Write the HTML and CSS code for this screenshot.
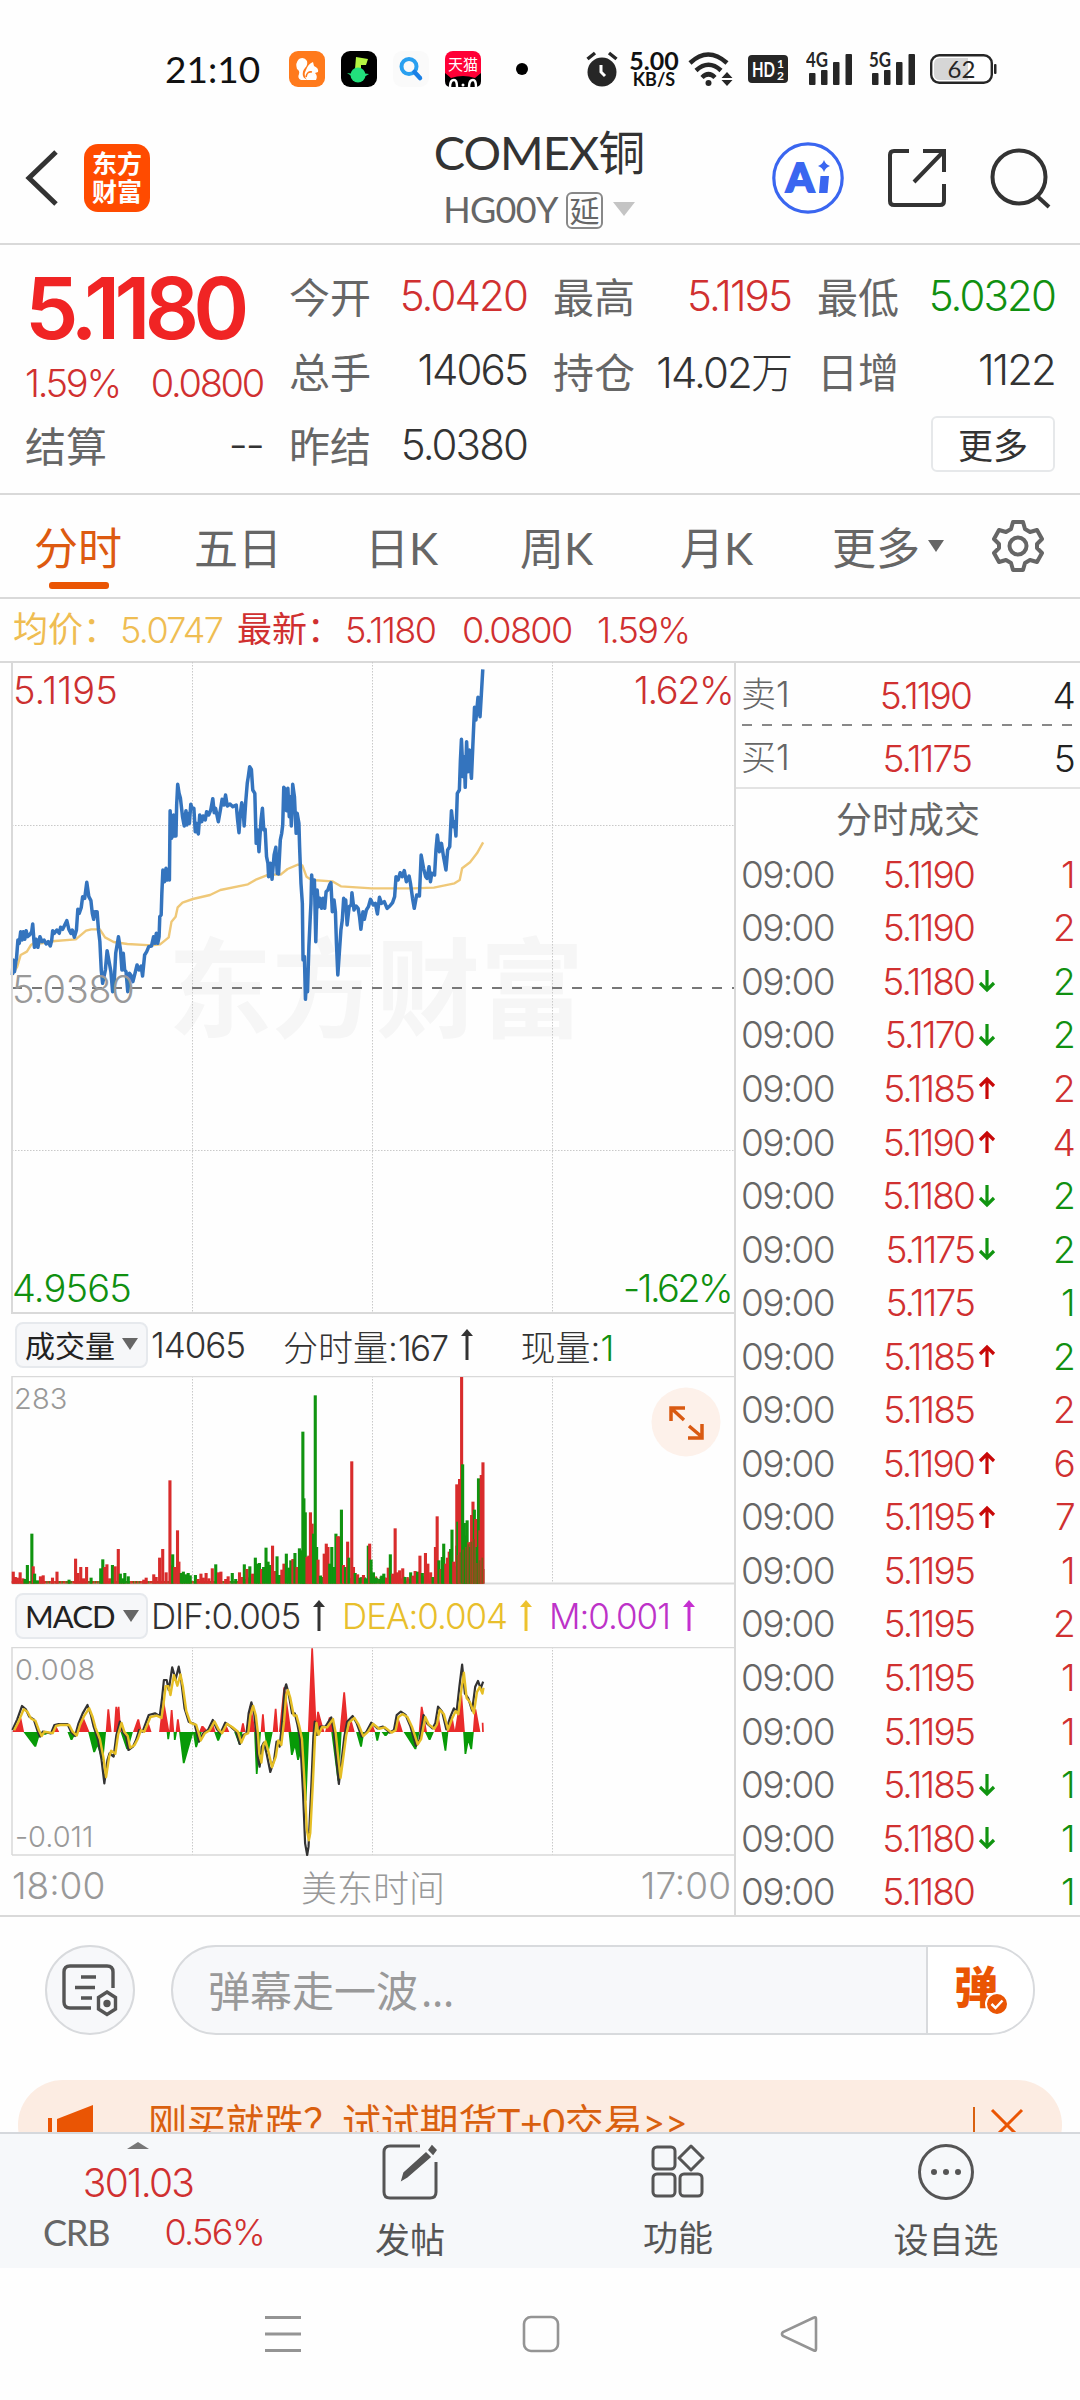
FILE: index.html
```html
<!DOCTYPE html>
<html lang="zh-CN">
<head>
  <meta charset="UTF-8" />
  <title>COMEX铜</title>
  <link rel="stylesheet" href="styles.css">
</head>
<body>
  <div class="status">
    <span class="clock">21:10</span>
    <div class="notify">
      <svg width="36" height="36" viewBox="0 0 36 36">
        <rect width="36" height="36" rx="9" fill="#ff7a1c"/>
        <path d="M8 18 Q6 12 10 8 Q15 5 18 10 Q19 14 16 17 Q13 20 14 25 Q15 28 20 29 H12 Q8 27 10 23 Q11 20 8 18Z" fill="#fff"/>
        <path d="M17 19 Q19 13 24 11 L25 15 Q30 17 29 21 L26 22 Q29 25 27 29 H18 Q14 24 17 19Z" fill="#fff"/>
        <path d="M17 26 Q18 20 23 21" fill="none" stroke="#ff7a1c" stroke-width="1.6"/>
      </svg>
      <svg width="36" height="36" viewBox="0 0 36 36">
        <rect width="36" height="36" rx="9" fill="#000"/>
        <path d="M15 6 L27 8 L25 14 H20 V18 H14Z" fill="#b4f542"/>
        <circle cx="17" cy="24" r="7.500" fill="#22e07c"/>
        <path d="M6 22 L13 23 L12 26Z M28 23 L20 22 L23 26Z" fill="#22e07c"/>
      </svg>
      <svg width="36" height="36" viewBox="0 0 36 36">
        <rect width="36" height="36" rx="9" fill="#fafafa"/>
        <circle cx="16" cy="15.500" r="7.500" fill="none" stroke="#2aa0f0" stroke-width="4"/>
        <path d="M21.500 21 L27 27" stroke="#1a80e6" stroke-width="4.500" stroke-linecap="round"/>
      </svg>
      <svg width="36" height="36" viewBox="0 0 36 36">
        <rect width="36" height="36" rx="8" fill="#ff0036"/>
        <text x="18" y="19" font-size="15" text-anchor="middle" fill="#fff">天猫</text>
        <path d="M0 22 L6 27 Q18 23 30 27 L36 22 V30 Q36 36 30 36 H6 Q0 36 0 30Z" fill="#000"/>
        <path d="M5 36 Q5 29 9 29 Q12 29 12 36 M24 36 Q24 29 28 29 Q31 29 31 36" fill="none" stroke="#fff" stroke-width="2.500"/>
        <circle cx="18" cy="34" r="1.500" fill="#fff"/>
      </svg>
    </div>
    <i class="dot"></i>
    <div class="system">
      <svg width="32" height="36" viewBox="0 0 32 36">
        <circle cx="16" cy="21" r="14.500" fill="#262626"/>
        <path d="M1.500 8 L9 2 M30.500 8 L23 2" stroke="#262626" stroke-width="3.500"/>
        <path d="M15 14 V21 L19 25" fill="none" stroke="#fff" stroke-width="3"/>
      </svg>
      <div class="speed"><b>5.00</b><b>KB/S</b></div>
      <svg width="46" height="36" viewBox="0 0 46 36" fill="none" stroke="#262626" stroke-width="4.500">
        <path d="M2 12 Q20 -5 39 12"/>
        <path d="M8 19.500 Q20.500 8 33 19.500"/>
        <path d="M14 26.500 Q20.500 20 27 26.500"/>
        <circle cx="20.500" cy="32" r="3" fill="#262626" stroke="none"/>
        <path d="M39 21 L44.500 27 H33.500Z M39 35 L44.500 29 H33.500Z" fill="#262626" stroke="none"/>
      </svg>
      <svg width="40" height="28" viewBox="0 0 40 28">
        <rect width="40" height="28" rx="4" fill="#262626"/>
        <text x="4" y="22" font-size="21" font-weight="700" fill="#fff" textLength="23" lengthAdjust="spacingAndGlyphs">HD</text>
        <text x="29" y="13" font-size="12" font-weight="700" fill="#fff">1</text>
        <text x="29" y="25" font-size="12" font-weight="700" fill="#fff">2</text>
      </svg>
      <svg class="signal" width="47" height="34" viewBox="0 0 47 34" fill="#262626">
        <text x="0" y="15" font-size="20" font-weight="700" textLength="22" lengthAdjust="spacingAndGlyphs">4G</text>
        <rect x="3" y="21" width="6.500" height="12" rx="1"/><rect x="15" y="18" width="6.500" height="15" rx="1"/>
        <rect x="27" y="10" width="6.500" height="23" rx="1"/><rect x="39.500" y="2" width="6.500" height="31" rx="1"/>
      </svg>
      <svg class="signal" width="47" height="34" viewBox="0 0 47 34" fill="#262626">
        <text x="0" y="15" font-size="20" font-weight="700" textLength="22" lengthAdjust="spacingAndGlyphs">5G</text>
        <rect x="3" y="21" width="6.500" height="12" rx="1"/><rect x="15" y="18" width="6.500" height="15" rx="1"/>
        <rect x="27" y="10" width="6.500" height="23" rx="1"/><rect x="39.500" y="2" width="6.500" height="31" rx="1"/>
      </svg>
      <svg width="68" height="30" viewBox="0 0 68 30">
        <rect x="1.200" y="1.200" width="60.600" height="27.600" rx="8" fill="#fff" stroke="#262626" stroke-width="2.400"/>
        <path d="M10 4 H38 V26 H10 Q4 26 4 20 V10 Q4 4 10 4Z" fill="#d6d6d6"/>
        <rect x="64" y="10" width="2.500" height="10" rx="1" fill="#262626"/>
        <text x="31.500" y="23.500" font-size="24" text-anchor="middle" fill="#262626">62</text>
      </svg>
    </div>
  </div>

  <header class="header">
    <div class="left">
      <svg width="34" height="56" viewBox="0 0 34 56"><path d="M31 2 L4 28 L31 54" fill="none" stroke="#333" stroke-width="5"/></svg>
      <div class="logo">东方<br>财富</div>
    </div>
    <div class="title">
      <h1>COMEX铜</h1>
      <div class="code"><span>HG00Y</span><em>延</em><i></i></div>
    </div>
    <div class="right">
      <svg width="72" height="72" viewBox="0 0 72 72">
        <circle cx="36" cy="36" r="34.200" fill="#fff" stroke="#3a66f0" stroke-width="3.200"/>
        <text x="14" y="50" class="ai">A</text>
        <path d="M48.500 34 H57 L55.500 51 H47Z" fill="#3a66f0"/>
        <path d="M52 18 Q53.500 22.500 58 24 Q53.500 25.500 52 30 Q50.500 25.500 46 24 Q50.500 22.500 52 18Z" fill="#3a66f0"/>
      </svg>
      <svg width="60" height="60" viewBox="0 0 60 60" fill="none" stroke="#333" stroke-width="4">
        <path d="M22 3 H7 Q3 3 3 7 V53 Q3 57 7 57 H53 Q57 57 57 53 V36"/>
        <path d="M36 3 H57 V24 M57 3 L27 34"/>
      </svg>
      <svg width="62" height="62" viewBox="0 0 62 62" fill="none" stroke="#333" stroke-width="4">
        <circle cx="29" cy="30" r="26.500"/><path d="M47 49 L59 60"/>
      </svg>
    </div>
  </header>

  <section class="quote">
    <div class="main-price">
      <strong>5.1180</strong>
      <p><span>1.59%</span><span>0.0800</span></p>
    </div>
    <div class="cell"><label>今开</label><span class="red">5.0420</span></div>
    <div class="cell"><label>最高</label><span class="red">5.1195</span></div>
    <div class="cell"><label>最低</label><span class="green">5.0320</span></div>
    <div class="cell"><label>总手</label><span>14065</span></div>
    <div class="cell"><label>持仓</label><span>14.02万</span></div>
    <div class="cell"><label>日增</label><span>1122</span></div>
    <div class="cell"><label>结算</label><span>--</span></div>
    <div class="cell"><label>昨结</label><span>5.0380</span></div>
    <button class="more">更多</button>
  </section>

  <nav class="tabs">
    <span class="active">分时</span>
    <span>五日</span>
    <span>日K</span>
    <span>周K</span>
    <span>月K</span>
    <span class="drop">更多<i></i></span>
    <svg width="54" height="54" viewBox="0 0 54 54" fill="none" stroke="#666" stroke-width="4" stroke-linejoin="round">
      <path d="M22 3 H32 L34 10 L39 13 L46 11 L51 20 L46 25 V29 L51 34 L46 43 L39 41 L34 44 L32 51 H22 L20 44 L15 41 L8 43 L3 34 L8 29 V25 L3 20 L8 11 L15 13 L20 10Z"/>
      <circle cx="27" cy="27" r="8.500"/>
    </svg>
  </nav>

  <div class="info">
    <label class="avg">均价：</label><span class="avg">5.0747</span>
    <label>最新：</label><span>5.1180</span><span class="change">0.0800</span><span>1.59%</span>
  </div>

  <main class="board">
    <div class="charts">
      <svg class="chart price" width="734" height="653" viewBox="0 661 734 653">
        <text x="168" y="1029" class="watermark" textLength="416" lengthAdjust="spacingAndGlyphs">东方财富</text>
        <path class="grid" d="M192.500 662 V1313 M372.500 662 V1313 M552.500 662 V1313 M12 825.500 H734 M12 1150.500 H734"/>
        <path class="base" d="M12 988 H734"/>
        <g transform="translate(0 650) scale(.34436 .33333)">
          <polyline id="avgLine" class="avg-line"/>
          <polyline id="priceLine" class="price-line"/>
        </g>
        <path class="frame" d="M12 662 V1313 H734"/>
        <text x="13" y="704" class="t38 up" textLength="103">5.1195</text>
        <text x="733" y="704" class="t38 up" text-anchor="end" textLength="99">1.62%</text>
        <text x="12" y="1003" class="t38 flat" textLength="121">5.0380</text>
        <text x="12" y="1302" class="t38 down" textLength="118">4.9565</text>
        <text x="732" y="1302" class="t38 down" text-anchor="end" textLength="109">-1.62%</text>
      </svg>

      <div class="indicator">
        <button>成交量<i></i></button>
        <span>14065</span>
        <span class="vol">分时量:<span>167</span></span><svg width="16" height="32" viewBox="0 0 16 32"><path d="M8 31 V6" stroke="#333" stroke-width="3"/><path d="M2 7 L8 0 L14 7Z" fill="#333"/></svg>
        <span class="now">现量:<span class="green">1</span></span>
      </div>
      <svg class="chart" width="734" height="209" viewBox="0 1376 734 209">
        <path class="grid" d="M192.500 1376 V1583 M372.500 1376 V1583 M552.500 1376 V1583"/>
        <path class="frame thin" d="M12 1583 V1376.500 H734"/>
        <path class="frame" d="M12 1583.500 H734"/>
        <g id="volume" transform="translate(0 1360) scale(.34436 .33333)"></g>
        <text x="14" y="1409" class="t30 flat" textLength="52">283</text>
        <circle cx="686" cy="1422" r="34.500" fill="#fdf1ea"/>
        <path d="M671 1421 V1408 H685 M671 1408 L684 1420 M689 1426 L702 1437 M702 1424 V1438 H688" fill="none" stroke="#d95a12" stroke-width="3.500"/>
      </svg>

      <div class="indicator macd">
        <button>MACD<i></i></button>
        <span>DIF:0.005</span><svg width="16" height="32" viewBox="0 0 16 32"><path d="M8 31 V6" stroke="#333" stroke-width="3"/><path d="M2 7 L8 0 L14 7Z" fill="#333"/></svg>
        <span class="dea">DEA:0.004</span><svg width="16" height="32" viewBox="0 0 16 32"><path d="M8 31 V6" stroke="#edc22e" stroke-width="3"/><path d="M2 7 L8 0 L14 7Z" fill="#edc22e"/></svg>
        <span class="m">M:0.001</span><svg width="16" height="32" viewBox="0 0 16 32"><path d="M8 31 V6" stroke="#c52fd0" stroke-width="3"/><path d="M2 7 L8 0 L14 7Z" fill="#c52fd0"/></svg>
      </div>
      <svg class="chart" width="734" height="210" viewBox="0 1647 734 210">
        <path class="grid" d="M192.500 1647 V1855 M372.500 1647 V1855 M552.500 1647 V1855"/>
        <path class="frame thin" d="M12 1855 V1647.500 H734"/>
        <path class="frame thin" d="M12 1855 H734"/>
        <g transform="translate(0 1580) scale(.34436 .33333)">
          <path id="histUp" fill="#e92b2b"/>
          <path id="histDown" fill="#079a07"/>
          <polyline id="dif" class="dif-line"/>
          <polyline id="dea" class="dea-line"/>
        </g>
        <text x="15" y="1680" class="t30 flat" textLength="79">0.008</text>
        <text x="15" y="1847" class="t30 flat" textLength="77">-0.011</text>
      </svg>
      <div class="axis"><span>18:00</span><span class="tz">美东时间</span><span>17:00</span></div>
    </div>

    <aside class="tape">
      <div class="row ask"><span>卖1</span><b>5.1190</b><u>4</u></div>
      <svg width="345" height="2"><path d="M6 1 H345" stroke="#888" stroke-width="2" stroke-dasharray="10 10"/></svg>
      <div class="row bid"><span>买1</span><b>5.1175</b><u>5</u></div>
      <h2>分时成交</h2>
      <div id="trades"></div>
    </aside>
  </main>

  <section class="danmu">
    <div class="round">
      <svg width="58" height="54" viewBox="0 0 58 54" fill="none" stroke="#555" stroke-width="3.400">
        <path d="M30 45 H9 Q3 45 3 39 V9 Q3 3 9 3 H46 Q52 3 52 9 V25"/>
        <path d="M20 14 H35 M14 24.500 H34 M20 35 H31"/>
        <path d="M46 29 L54.500 34.500 V46 L46 51.500 L37.500 46 V34.500Z"/><circle cx="46" cy="40.500" r="2" fill="#555"/>
      </svg>
    </div>
    <div class="field">
      <span>弹幕走一波<span class="more-dots">…</span></span>
      <div class="send">弹<svg width="24" height="24" viewBox="0 0 24 24"><circle cx="12" cy="12" r="11" fill="#ea5504" stroke="#fff" stroke-width="2"/><path d="M6.500 12 L10.500 16 L17.500 8.500" fill="none" stroke="#fff" stroke-width="2.500"/></svg></div>
    </div>
  </section>

  <div class="promo-wrap">
    <div class="promo">
      <svg width="46" height="52" viewBox="0 0 46 52" fill="#ea5504"><rect x="0" y="13" width="4" height="39"/><path d="M9 14 L45 0 V52 H9Z"/></svg>
      <span>刚买就跌？试试期货T+0交易&gt;&gt;</span>
      <i></i>
      <svg width="34" height="34" viewBox="0 0 34 34"><path d="M2 2 L32 32 M32 2 L2 32" stroke="#ea5504" stroke-width="3"/></svg>
    </div>
  </div>

  <footer class="bottom">
    <div class="index">
      <i></i>
      <strong>301.03</strong>
      <p><span>CRB</span><em>0.56%</em></p>
    </div>
    <div class="item post">
      <svg width="56" height="56" viewBox="0 0 56 56" fill="none" stroke="#555" stroke-width="3">
        <path d="M38 2 H8 Q2 2 2 8 V48 Q2 54 8 54 H48 Q54 54 54 48 V18"/>
        <path d="M20 36 L22 29 L44 9 L48 13 L25 33Z M47 6 L50 2 L54 6 L51 10Z" fill="#555" stroke-width="1.500"/>
      </svg>
      <span>发帖</span>
    </div>
    <div class="item func">
      <svg width="54" height="54" viewBox="0 0 54 54" fill="none" stroke="#555" stroke-width="3">
        <rect x="2" y="3" width="22" height="22" rx="4"/><path d="M40 2 L52 14 L40 26 L28 14Z" stroke-linejoin="round"/>
        <rect x="2" y="30" width="22" height="22" rx="4"/><rect x="29" y="30" width="22" height="22" rx="4"/>
      </svg>
      <span>功能</span>
    </div>
    <div class="item fav">
      <svg width="56" height="56" viewBox="0 0 56 56"><circle cx="28" cy="28" r="26.500" fill="none" stroke="#555" stroke-width="3"/><circle cx="16" cy="28" r="3" fill="#555"/><circle cx="28" cy="28" r="3" fill="#555"/><circle cx="40" cy="28" r="3" fill="#555"/></svg>
      <span>设自选</span>
    </div>
  </footer>

  <div class="sysnav">
    <svg width="38" height="38" viewBox="0 0 38 38"><path d="M1 2.500 H37 M1 19 H37 M1 35.500 H37" stroke="#949494" stroke-width="3"/></svg>
    <svg width="38" height="38" viewBox="0 0 38 38"><rect x="2" y="2" width="34" height="34" rx="7" fill="none" stroke="#949494" stroke-width="2.600"/></svg>
    <svg width="38" height="38" viewBox="0 0 38 38"><path d="M34 2.500 Q36 1.500 36 4 V34 Q36 36.500 34 35.500 L3 21 Q1 19 3 17Z" fill="none" stroke="#949494" stroke-width="2.600"/></svg>
  </div>

  <script src="chart.js"></script>
</body>
</html>
```

FILE: styles.css
```css
* {
  box-sizing: border-box;
}

body {
  margin: 0;
  width: 1080px;
  height: 2400px;
  overflow: hidden;
  background: #fefefe;
  color: #333;
  font-family: Lato, "Noto Sans CJK SC", sans-serif;
}

svg {
  display: block;
  flex: none;
}

h1, h2, p {
  margin: 0;
  font-weight: 400;
}

em, i, u {
  font-style: normal;
  text-decoration: none;
}

b {
  font-weight: 400;
}

.red { color: #d03030 !important; }
.green { color: #109010 !important; }

/* 数字 */
.main-price strong,
.main-price span,
.cell span,
.info span,
.indicator span,
.axis span,
.row span,
.row b,
.row u,
.index strong,
.index em,
.chart text {
  font-family: Inter, "Noto Sans CJK SC", sans-serif;
  font-weight: 300;
  letter-spacing: -.045em;
}

/* 状态栏 */
.status {
  height: 104px;
  padding: 34px 82px 0 165px;
  display: flex;
  align-items: center;
}

.clock {
  width: 124px;
  margin-top: -1px;
  font-size: 37px;
  color: #111;
}

.notify {
  display: flex;
  gap: 16px;
}

.dot {
  width: 12px;
  height: 12px;
  margin-left: 35px;
  border-radius: 50%;
  background: #000;
}

.system {
  display: flex;
  align-items: center;
  margin-left: auto;
}

.speed {
  width: 50px;
  margin: 0 9px 0 11px;
  display: flex;
  flex-direction: column;
  align-items: center;
  color: #111;
}

.speed b {
  font-size: 25px;
  line-height: 19px;
  font-weight: 700;
}

.speed b + b {
  font-size: 18px;
  line-height: 18px;
}

.system svg + svg { margin-left: 14px; }
.system .signal { margin-left: 18px; }
.system .signal + .signal { margin-left: 16px; }

/* 标题栏 */
.header {
  height: 141px;
  padding: 9px 28px 0 25px;
  display: grid;
  grid-template-columns: 364px 300px 363px;
  border-bottom: 2px solid #d9d9d9;
}

.left, .right {
  display: flex;
  align-items: center;
  height: 129px;
}

.left { gap: 25px; }

.logo {
  width: 66px;
  height: 68px;
  padding-top: 5px;
  border-radius: 14px;
  background: #ff4b00;
  color: #fff;
  font-size: 25px;
  font-weight: 700;
  line-height: 28px;
  text-align: center;
}

.right {
  justify-content: flex-end;
  gap: 43px;
}

.ai {
  font: 900 40px Lato, sans-serif;
  fill: #3a66f0;
  stroke: #3a66f0;
  stroke-width: 2;
}

.title {
  text-align: center;
}

.title h1 {
  margin-top: 9px;
  font-size: 47px;
  line-height: 60px;
  letter-spacing: -1px;
}

.code {
  display: flex;
  align-items: center;
  justify-content: center;
  height: 54px;
  color: #666;
  font-size: 36px;
  letter-spacing: -.7px;
}

.code em {
  width: 37px;
  height: 37px;
  margin: 2px 0 0 8px;
  border: 2px solid #888;
  border-radius: 6px;
  font-size: 30px;
  line-height: 32px;
}

.code i {
  margin-left: 10px;
  border: 11px solid transparent;
  border-top: 14px solid #c4c4c4;
  border-bottom: 0;
}

/* 行情 */
.quote {
  height: 250px;
  padding: 13px 25px 0;
  display: grid;
  grid-template-columns: repeat(4, 238px);
  grid-template-rows: repeat(3, 74.5px);
  column-gap: 26px;
  border-bottom: 2px solid #d9d9d9;
}

.main-price {
  grid-row: span 2;
  color: #d03030;
}

.main-price strong {
  display: block;
  height: 99px;
  font-size: 85px;
  font-weight: 600;
  line-height: 102px;
  letter-spacing: -.068em;
  color: #f02424;
}

.main-price p {
  display: flex;
  justify-content: space-between;
  font-size: 38px;
  line-height: 52px;
}

.main-price p span { letter-spacing: -.06em; }

.cell {
  display: flex;
  align-items: center;
  justify-content: space-between;
  font-size: 42px;
  white-space: nowrap;
}

.cell label {
  color: #666;
  font-size: 41px;
}

.more {
  grid-column: 4;
  width: 124px;
  height: 56px;
  margin-top: -1px;
  justify-self: end;
  align-self: center;
  padding: 0 0 6px;
  border: 2px solid #e6e8ea;
  border-radius: 6px;
  background: #fff;
  color: #333;
  font: 35px "Noto Sans CJK SC", sans-serif;
}

/* 周期 */
.tabs {
  height: 104px;
  padding-left: 34px;
  display: grid;
  grid-template-columns: 160px 171px 155px 160px 152px 159px 54px;
  align-items: center;
  border-bottom: 2px solid #d9d9d9;
  color: #666;
  font-size: 44px;
}

.tabs .active {
  position: relative;
  color: #dd5a10;
}

.tabs .active::after {
  content: "";
  position: absolute;
  left: 15px;
  bottom: -11px;
  width: 60px;
  height: 7px;
  border-radius: 3px;
  background: #ea5504;
}

.drop {
  display: flex;
  align-items: center;
}

.drop i {
  margin-left: 8px;
  border: 8px solid transparent;
  border-top: 12px solid #666;
  border-bottom: 0;
}

.info {
  display: grid;
  grid-template-columns: 107px 117px 108px 117px 135px 1fr;
  align-items: center;
  height: 62px;
  padding-left: 13px;
  color: #d03030;
  font-size: 36px;
}

.info label { font-size: 35px; line-height: 50px; margin-top: -4px; }
.info .avg { color: #efbd52; }

/* 图表与成交 */
.board {
  display: flex;
  height: 1256px;
  border-top: 2px solid #d9d9d9;
  border-bottom: 2px solid #d9d9d9;
}

.charts { width: 734px; }

.price { margin-top: -2px; }

.grid {
  fill: none;
  stroke: #c9c9c9;
  stroke-width: 1;
  stroke-dasharray: 1.500 1.500;
}

.frame {
  fill: none;
  stroke: #d9d9d9;
  stroke-width: 2;
}

.thin { stroke-width: 1.5; }

.base {
  stroke: #777;
  stroke-width: 1.800;
  stroke-dasharray: 10 10;
}

.avg-line, .price-line, .dif-line, .dea-line {
  fill: none;
  vector-effect: non-scaling-stroke;
  stroke-linejoin: round;
}

.avg-line { stroke: #efc878; stroke-width: 2.4px; }
.price-line { stroke: #3474be; stroke-width: 3.5px; }
.dif-line { stroke: #333; stroke-width: 2.2px; }
.dea-line { stroke: #e5be25; stroke-width: 2.4px; }

.chart .watermark {
  font-size: 108px;
  font-weight: 700;
  letter-spacing: 0;
  fill: #f6f6f6;
}

.t38 { font-size: 38px; }
.t30 { font-size: 29px; }
.up { fill: #cc3030; }
.down { fill: #109010; }
.flat { fill: #999; }

.indicator {
  display: flex;
  align-items: center;
  height: 62px;
  padding-left: 15px;
  font-size: 35px;
  white-space: nowrap;
}

.indicator button {
  display: flex;
  align-items: center;
  justify-content: space-between;
  width: 133px;
  height: 46px;
  margin-right: 3px;
  padding: 0 8px 2px;
  border: 2px solid #e6e9ed;
  border-radius: 8px;
  background: #f6f7f9;
  color: #222;
  font: 30px Lato, "Noto Sans CJK SC", sans-serif;
}

.indicator button i {
  border: 8px solid transparent;
  border-top: 12px solid #666;
  border-bottom: 0;
}

.indicator > span { letter-spacing: -.03em; }
.indicator svg { margin-left: 11px; }
.indicator .vol { margin-left: 38px; letter-spacing: 0; }
.indicator .now { margin-left: 46px; letter-spacing: 0; }

.macd button { padding: 0 7px 0 8px; font-size: 31px; letter-spacing: -1px; }
.macd .dea, .macd .m { margin-left: 15px; }
.macd .dea { color: #e8bf2c; }
.macd .m { color: #bd32c8; }

.axis {
  display: flex;
  justify-content: space-between;
  align-items: center;
  height: 57px;
  padding: 0 3px 0 12px;
  color: #999;
  font-size: 37px;
}

.axis span { letter-spacing: 0; }
.axis .tz { font-size: 36px; }

.tape {
  width: 346px;
  border-left: 2px solid #d9d9d9;
}

.row {
  display: flex;
  align-items: center;
  height: 53.55px;
  padding: 1px 6px 0 5px;
  color: #666;
  font-size: 37px;
}

.row span { width: 134px; white-space: nowrap; }
.row b { width: 99px; color: #d03030; text-align: right; white-space: nowrap; letter-spacing: -.05em; }
.row svg { margin-left: 4px; }
.row u { margin-left: auto; }
.row u.up { color: #d03030; }
.row u.down { color: #109010; }

.row.ask { height: 61px; padding-top: 4px; }
.row.bid { height: 63px; padding-top: 3px; border-bottom: 2px solid #e3e3e3; }
.ask span, .bid span { width: 131px; font-size: 35px; line-height: 50px; margin-top: -3px; letter-spacing: 0; }
.ask u, .bid u { color: #222; }

.tape h2 {
  height: 58px;
  line-height: 60px;
  text-align: center;
  color: #666;
  font-size: 36px;
}

/* 弹幕 */
.danmu {
  display: flex;
  align-items: center;
  gap: 36px;
  height: 163px;
  padding: 0 45px 17px;
}

.round {
  width: 90px;
  height: 90px;
  display: flex;
  align-items: center;
  justify-content: center;
  border: 2px solid #d8dadd;
  border-radius: 50%;
  background: #f7f8fa;
}

.field {
  display: flex;
  align-items: center;
  flex: 1;
  height: 90px;
  padding-left: 35px;
  overflow: hidden;
  border: 2px solid #d8dadd;
  border-radius: 45px;
  background: #f7f8fa;
  color: #999;
  font-size: 42px;
}

.field > span { margin-top: -3px; }

.more-dots {
  margin-left: 3px;
  font-family: "Noto Sans";
}

.send {
  position: relative;
  width: 107px;
  height: 90px;
  margin-left: auto;
  padding-left: 26px;
  border-left: 2px solid #d8dadd;
  background: #fff;
  color: #ea5504;
  font-size: 44px;
  font-weight: 900;
  line-height: 84px;
}

.send svg {
  position: absolute;
  left: 57px;
  top: 47px;
}

.promo-wrap {
  height: 52px;
  overflow: hidden;
  padding: 0 18px;
}

.promo {
  display: flex;
  align-items: flex-start;
  height: 90px;
  padding: 25px 38px 0 30px;
  border-radius: 45px;
  background: #fcece2;
  color: #d9600f;
  font-size: 39px;
}

.promo span { margin: -4px auto 0 54px; line-height: 42px; white-space: nowrap; letter-spacing: -.2px; }
.promo i { width: 2px; height: 42px; margin: 2px 15px 0 0; background: #d9600f; }
.promo svg:last-child { margin-top: 3px; }

/* 底栏 */
.bottom {
  display: flex;
  height: 136px;
  border-top: 2px solid #d5d8dc;
  background: #f6f8fa;
  color: #555;
}

.index {
  display: flex;
  flex-direction: column;
  align-items: center;
  width: 276px;
  padding: 8px 12px 0 43px;
  color: #d03030;
}

.index i {
  margin-right: 31px;
  border: 11px solid transparent;
  border-bottom: 7px solid #777;
  border-top: 0;
}

.index strong {
  margin: 9px 31px 0 0;
  font-size: 39px;
  font-weight: 300;
  line-height: 50px;
}

.index p {
  display: flex;
  justify-content: space-between;
  width: 100%;
  font-size: 36px;
  line-height: 49px;
}

.index span { color: #666; letter-spacing: -1.2px; }

.item {
  display: flex;
  flex-direction: column;
  align-items: center;
  width: 268px;
  padding-top: 10px;
  font-size: 35px;
}

.item span { line-height: 40px; margin-top: 19px; }

/* 系统导航 */
.sysnav {
  display: flex;
  justify-content: space-between;
  padding: 47px 262px 0 264px;
}
```

FILE: chart.js
```js
const set = (id, pts) => document.getElementById(id).setAttribute('points', pts);

const price = '36,975 38,930 42,965 46,935 48,925 52,870 56,880 60,845 64,870 68,845 72,868 76,842 80,860 86,855 92,845 95,822 100,892 105,868 110,892 116,860 122,875 128,870 134,882 140,875 146,888 150,872 153,842 158,850 165,840 172,850 176,832 182,838 188,825 194,812 200,838 206,850 210,840 216,862 222,840 226,778 230,790 236,772 240,740 246,745 252,697 258,740 264,752 268,790 272,808 276,785 282,785 286,840 290,875 294,960 298,1000 302,980 306,960 311,902 316,930 322,965 327,1025 332,990 336,910 344,860 350,900 354,960 358,910 362,960 366,965 371,1025 376,970 380,975 386,995 392,970 398,945 404,960 410,948 414,978 420,915 426,905 432,890 440,888 446,860 450,880 454,850 458,880 462,860 464,800 468,795 470,730 473,660 478,695 482,655 486,690 490,658 492,690 494,482 498,565 502,555 504,495 508,558 511,558 513,465 516,403 520,430 524,445 530,500 535,528 540,482 543,525 548,490 550,520 554,463 558,475 563,475 567,545 570,520 576,552 580,495 586,515 590,498 596,510 600,485 606,495 612,480 618,446 622,488 626,475 634,515 640,480 645,448 650,465 655,435 660,468 668,462 676,470 686,465 690,510 694,548 698,490 702,458 706,480 709,528 714,450 718,400 721,380 725,350 730,358 734,420 740,430 744,580 748,540 752,605 758,510 762,475 766,540 770,538 774,620 778,640 780,680 785,640 790,688 796,615 801,592 805,670 809,672 814,570 818,550 821,525 824,412 830,420 832,482 836,415 840,500 843,440 846,528 850,403 855,440 860,550 863,490 868,520 870,590 874,700 878,760 880,930 884,920 887,1048 890,990 893,1025 897,890 901,800 903,760 905,675 909,730 913,690 917,875 921,720 925,770 929,745 934,775 938,745 943,775 947,725 952,720 957,705 961,698 965,785 970,750 974,785 977,880 981,975 986,900 990,840 994,810 998,745 1002,770 1004,750 1008,825 1014,770 1020,765 1022,728 1028,780 1034,768 1040,775 1044,800 1048,838 1054,785 1058,808 1064,780 1070,770 1076,748 1084,765 1090,760 1096,792 1102,742 1108,760 1116,755 1124,775 1132,768 1140,758 1146,740 1150,680 1156,690 1162,668 1168,680 1174,662 1180,695 1188,678 1192,700 1198,745 1203,775 1210,735 1218,738 1223,615 1230,655 1236,680 1240,685 1246,650 1250,695 1254,670 1262,675 1266,600 1270,555 1276,605 1282,580 1288,620 1295,660 1300,600 1306,590 1311,482 1316,530 1320,515 1324,558 1328,430 1334,420 1337,330 1340,268 1345,380 1348,320 1351,412 1355,275 1359,365 1363,300 1369,385 1373,290 1378,172 1382,210 1388,142 1394,200 1398,130 1402,58';
const avg = '36,975 50,950 60,915 78,905 90,885 100,878 120,880 160,873 220,868 250,842 265,838 290,838 305,862 330,876 370,882 440,886 465,883 490,862 498,815 510,800 516,772 530,758 560,747 610,735 640,720 720,703 745,688 780,674 815,674 835,657 865,644 878,646 890,680 905,690 965,694 990,709 1080,715 1200,715 1260,713 1320,700 1335,690 1342,655 1365,637 1385,610 1403,577';
set('priceLine', price);
set('avgLine', avg);

// 成交量：x, 高度, 颜色
const vols = '38 36 r,44 20 r,50 18 r,58 34 r,66 16 r,72 14 g,79 56 g,92 150 g,96 52 r,100 30 g,108 10 g,117 22 r,125 25 r,152 18 r,165 36 r,200 12 g,219 75 r,226 32 r,234 50 r,242 16 r,251 50 r,264 18 g,292 46 g,298 73 g,304 50 r,310 58 r,318 16 r,326 56 g,334 52 r,343 104 r,349 30 g,356 16 g,362 32 g,372 22 g,417 12 r,424 18 r,446 28 r,453 20 r,463 78 r,472 104 r,482 34 r,493 310 r,497 55 r,501 88 g,507 50 r,515 160 r,519 66 r,526 32 g,532 36 g,539 28 g,546 32 g,552 25 g,567 26 g,575 14 r,583 30 r,590 18 r,598 32 r,606 16 r,616 46 r,626 58 g,634 34 r,641 36 r,655 14 r,662 22 r,674 32 g,684 14 g,695 34 r,703 20 r,709 58 g,717 44 r,725 52 g,733 30 r,741 78 g,747 60 g,753 62 g,759 44 r,765 50 g,772 108 g,778 66 g,784 56 g,791 114 r,797 38 r,804 82 g,811 26 g,818 42 r,824 60 r,831 90 g,838 48 g,844 70 g,850 74 r,856 92 g,862 50 r,869 106 g,875 100 g,879 456 g,882 256 g,886 214 g,891 80 r,896 84 r,901 214 r,906 180 r,910 150 g,915 565 g,919 110 g,923 72 r,930 24 g,936 20 g,941 90 r,947 120 r,952 110 r,957 60 g,963 110 g,969 50 g,975 150 g,980 142 r,984 142 r,991 222 g,997 56 r,1003 50 g,1009 126 r,1013 78 g,1021 367 r,1026 50 r,1031 32 g,1038 28 r,1045 18 g,1055 26 r,1061 16 g,1069 114 g,1073 120 r,1077 72 g,1084 34 g,1092 18 g,1102 14 g,1108 24 g,1114 30 g,1122 18 r,1127 48 r,1133 88 g,1140 30 r,1147 166 r,1153 34 r,1160 40 r,1169 46 r,1176 20 g,1184 16 r,1192 34 g,1199 24 r,1205 38 r,1212 36 g,1219 84 r,1226 32 g,1235 92 r,1242 60 r,1250 34 r,1257 20 g,1264 110 r,1269 202 r,1274 70 g,1280 44 r,1284 80 g,1288 120 g,1294 60 r,1299 78 r,1304 96 r,1308 104 g,1312 162 g,1317 66 r,1322 52 r,1326 298 r,1329 186 g,1334 314 r,1340 620 r,1343 358 g,1348 182 g,1352 144 g,1356 190 g,1361 124 r,1365 110 g,1369 206 r,1373 246 r,1377 222 g,1381 194 r,1385 110 g,1389 316 g,1393 160 r,1397 326 r,1402 364 r';
let bars = '';
for (let x = 34; x < 1404; x += 4) {
  const h = x < 700 ? 8 : x > 1320 ? 40 + x * 7 % 90 : 8 + x * 7 % 17;
  bars += `<rect x="${x}" y="${671 - h}" width="5" height="${h}" fill="${x * 13 % 7 < 4 ? '#d03020' : '#507818'}"/>`;
}
for (const v of vols.split(',')) {
  const [x, h, c] = v.split(' ');
  bars += `<rect x="${x - 4}" y="${671 - h}" width="9" height="${h}" fill="${c === 'r' ? '#d82c2c' : '#109410'}"/>`;
}
// 尾盘放量，红绿柱叠在一起
for (let x = 1326; x < 1404; x += 8) {
  bars += `<rect x="${x}" y="${671 - 60 - x * 11 % 80}" width="5" height="${60 + x * 11 % 80}" fill="#7a5a18"/>`;
}
document.getElementById('volume').innerHTML = bars;

// MACD
const dif = '36,450 50,418 64,378 75,388 85,410 98,418 108,450 116,470 124,455 148,460 158,435 170,432 196,432 206,455 218,468 228,430 240,400 254,375 264,405 272,440 285,480 295,540 303,610 312,540 318,520 330,530 338,465 348,425 356,455 366,470 373,510 386,500 395,480 404,450 414,455 432,405 450,400 464,408 470,360 476,300 484,300 490,330 500,262 510,298 519,260 526,300 536,385 548,425 565,432 578,485 590,460 604,450 618,420 630,448 640,460 654,428 670,440 686,455 696,492 706,465 716,460 722,400 730,367 738,400 744,460 748,530 754,560 760,500 766,488 774,520 785,576 796,540 803,485 812,500 820,420 826,330 831,313 838,340 848,400 856,400 864,435 872,480 880,640 886,790 892,825 896,800 904,620 910,470 914,425 920,465 930,440 945,440 962,412 970,460 976,530 984,612 990,560 1000,470 1008,425 1024,408 1036,430 1050,470 1064,455 1078,428 1096,445 1112,440 1132,458 1144,450 1152,405 1164,395 1178,405 1192,440 1208,498 1218,480 1230,405 1240,430 1256,445 1264,430 1272,380 1284,395 1296,448 1308,410 1318,385 1326,395 1334,320 1342,254 1350,340 1360,355 1371,392 1380,320 1388,303 1396,325 1403,305';
set('dif', dif);
set('dea', dif.split(' ').map(p => {
  const [x, y] = p.split(',').map(Number);
  return Math.min(x + 5, 1404) + ',' + (456 + (y - 456) * 0.88);
}).join(' '));

// 每个柱群：起点, 峰值 x, 终点, 峰值 y
const up = [[36,60,70,415],[150,160,172,435],[222,240,260,410],[307,315,324,388],[330,338,350,380],[334,345,352,380],[386,402,412,418],[418,430,440,430],[462,475,492,365],[491,499,506,390],[510,517,524,418],[578,588,606,438],[606,616,626,428],[644,654,666,432],[698,706,713,430],[714,728,742,378],[757,764,770,403],[792,801,808,386],[810,826,846,322],[894,907,920,205],[915,924,942,395],[944,958,970,412],[986,1000,1012,337],[1010,1020,1030,425],[1068,1078,1090,428],[1142,1156,1170,416],[1216,1225,1240,380],[1262,1272,1282,408],[1298,1312,1322,410],[1320,1340,1350,345],[1373,1381,1395,388],[1400,1402,1405,428]];
const down = [[68,103,118,500],[118,130,150,464],[196,208,222,480],[256,274,300,517],[270,298,308,540],[350,370,386,508],[484,489,494,478],[504,508,514,480],[520,534,562,550],[560,570,586,502],[622,634,646,482],[680,697,704,494],[738,746,758,582],[768,778,792,516],[838,848,870,525],[848,866,890,540],[870,888,898,662],[962,983,992,602],[1034,1049,1058,500],[1088,1096,1104,482],[1108,1120,1132,468],[1172,1207,1218,508],[1234,1248,1260,480],[1282,1294,1302,512],[1345,1352,1366,522],[1352,1369,1376,508]];
const area = list => list.map(([a, b, c, y]) => `M${a} 456 L${b - 3} ${y} H${b + 2} L${c} 456Z`).join('');
document.getElementById('histUp').setAttribute('d', area(up));
document.getElementById('histDown').setAttribute('d', area(down));

// 逐笔：价格, 方向, 手数, 买卖
const trades = [
  ['5.1190', '', 1, 'up'], ['5.1190', '', 2, 'up'], ['5.1180', 'd', 2, 'down'], ['5.1170', 'd', 2, 'down'],
  ['5.1185', 'u', 2, 'up'], ['5.1190', 'u', 4, 'up'], ['5.1180', 'd', 2, 'down'], ['5.1175', 'd', 2, 'down'],
  ['5.1175', '', 1, 'down'], ['5.1185', 'u', 2, 'down'], ['5.1185', '', 2, 'up'], ['5.1190', 'u', 6, 'up'],
  ['5.1195', 'u', 7, 'up'], ['5.1195', '', 1, 'up'], ['5.1195', '', 2, 'up'], ['5.1195', '', 1, 'up'],
  ['5.1195', '', 1, 'up'], ['5.1185', 'd', 1, 'down'], ['5.1180', 'd', 1, 'down'], ['5.1180', '', 1, 'down']
];
const arrows = {
  u: '<svg width="18" height="24" viewBox="0 0 18 24"><path d="M9 23 V3 M2 10 L9 3 L16 10" fill="none" stroke="#c80808" stroke-width="3.200"/></svg>',
  d: '<svg width="18" height="24" viewBox="0 0 18 24"><path d="M9 1 V21 M2 14 L9 21 L16 14" fill="none" stroke="#109410" stroke-width="3.200"/></svg>'
};
document.getElementById('trades').innerHTML = trades.map(([p, dir, n, side]) =>
  `<div class="row"><span>09:00</span><b>${p}</b>${arrows[dir] || ''}<u class="${side}">${n}</u></div>`
).join('');
```
